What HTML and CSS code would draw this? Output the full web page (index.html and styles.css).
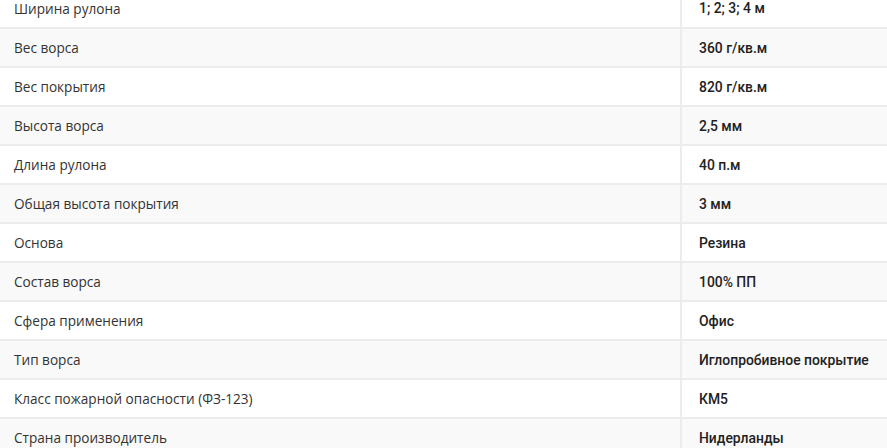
FILE: index.html
```html
<!DOCTYPE html>
<html lang="ru">
<head>
<meta charset="utf-8">
<link rel="stylesheet" href="styles.css">
</head>
<body>
<table class="specs">
  <tr><td class="label">Ширина рулона</td><td class="value">1; 2; 3; 4 м</td></tr>
  <tr><td class="label">Вес ворса</td><td class="value">360 г/кв.м</td></tr>
  <tr><td class="label">Вес покрытия</td><td class="value">820 г/кв.м</td></tr>
  <tr><td class="label">Высота ворса</td><td class="value">2,5 мм</td></tr>
  <tr><td class="label">Длина рулона</td><td class="value">40 п.м</td></tr>
  <tr><td class="label">Общая высота покрытия</td><td class="value">3 мм</td></tr>
  <tr><td class="label">Основа</td><td class="value">Резина</td></tr>
  <tr><td class="label">Состав ворса</td><td class="value">100% ПП</td></tr>
  <tr><td class="label">Сфера применения</td><td class="value">Офис</td></tr>
  <tr><td class="label">Тип ворса</td><td class="value">Иглопробивное покрытие</td></tr>
  <tr><td class="label">Класс пожарной опасности (ФЗ-123)</td><td class="value">КМ5</td></tr>
  <tr><td class="label">Страна производитель</td><td class="value">Нидерланды</td></tr>
</table>
</body>
</html>
```
FILE: styles.css
```css
html, body {
  margin: 0;
  padding: 0;
  background: #ffffff;
  overflow: hidden;
}
.specs {
  width: 887px;
  margin-top: -11px;
  border-collapse: collapse;
  font-family: "Open Sans", "Noto Sans", sans-serif;
  font-size: 13.6px;
  color: #333333;
}
.specs tr {
  height: 39px;
  border-bottom: 2px solid #ececec;
}
.specs tr:nth-child(even) {
  background: #f9f9f9;
}
.specs td {
  padding: 0;
  vertical-align: middle;
}
.label {
  width: 666px;
  padding-left: 14px !important;
  border-right: 2px solid #ececec;
}
.value {
  padding-left: 17px !important;
  font-family: Roboto, "Open Sans", sans-serif;
  font-size: 13.9px;
  font-weight: 500;
  color: #222222;
}
```
